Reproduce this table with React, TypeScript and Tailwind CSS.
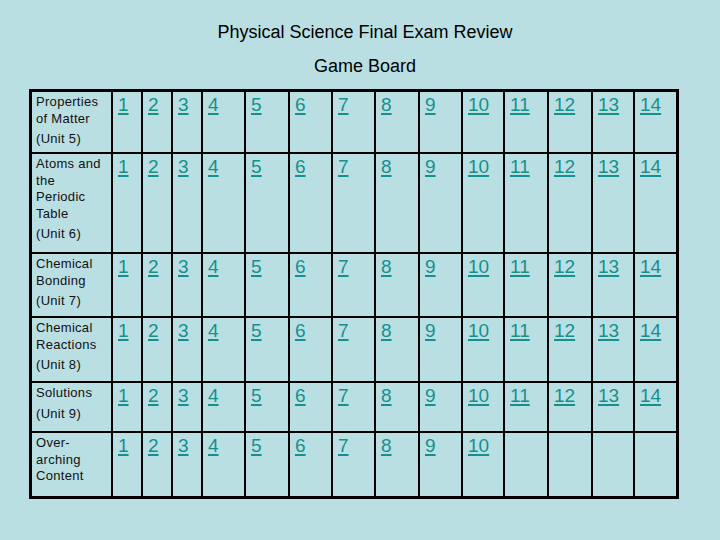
import React from "react";

const rows = [
  { lines: ["Properties", "of Matter"], unit: "(Unit 5)", h: "h-[60px]", count: 14 },
  { lines: ["Atoms and", "the", "Periodic", "Table"], unit: "(Unit 6)", h: "h-[98px]", count: 14 },
  { lines: ["Chemical", "Bonding"], unit: "(Unit 7)", h: "h-[62px]", count: 14 },
  { lines: ["Chemical", "Reactions"], unit: "(Unit 8)", h: "h-[63px]", count: 14 },
  { lines: ["Solutions"], unit: "(Unit 9)", h: "h-[48px]", count: 14 },
  { lines: ["Over-", "arching", "Content"], unit: "", h: "h-[63px]", count: 10 },
];

const nums = Array.from({ length: 14 }, (_, i) => i + 1);

export default function App() {
  return (
    <div
      className="w-[720px] h-[540px] bg-[#b9dfe3] overflow-hidden"
      style={{ fontFamily: '"Liberation Sans", Arial, sans-serif' }}
    >
      <div className="pl-[10px] pt-[22px] text-center text-[18px] leading-[20px] text-black">
        Physical Science Final Exam Review
      </div>
      <div className="pl-[10px] mt-[14px] text-center text-[18px] leading-[20px] text-black">
        Game Board
      </div>
      <div className="ml-[29px] mt-[13px] w-[650px] bg-black p-[3px] grid gap-[2px] grid-cols-[79px_28px_28px_28px_41px_42px_41px_41px_42px_41px_40px_42px_42px_40px_41px]">
        {rows.map((row, r) => (
          <React.Fragment key={r}>
            <div className={`${row.h} bg-[#b9dfe3] pl-[4px] pt-[2px] text-[13px] leading-[16.5px] tracking-[0.3px] text-[#111]`}>
              {row.lines.map((l) => (
                <div key={l}>{l}</div>
              ))}
              {row.unit && <div className="mt-[4px]">{row.unit}</div>}
            </div>
            {nums.map((n) => (
              <div key={n} className={`${row.h} bg-[#b9dfe3] pl-[5px] pt-[2px]`}>
                {n <= row.count && (
                  <a
                    href="#"
                    className="text-[19px] leading-[22px] text-[#15908f] underline decoration-[1.5px] underline-offset-[2px]"
                  >
                    {n}
                  </a>
                )}
              </div>
            ))}
          </React.Fragment>
        ))}
      </div>
    </div>
  );
}
